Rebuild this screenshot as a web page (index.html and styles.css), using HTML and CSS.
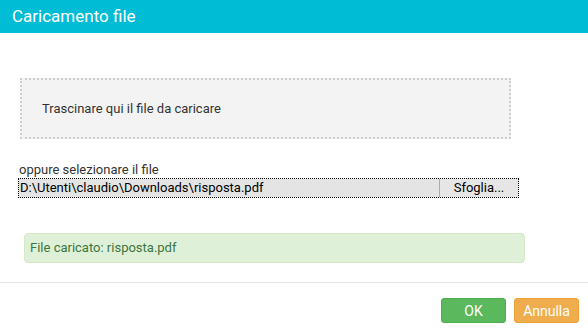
FILE: index.html
```html
<!DOCTYPE html>
<html lang="it">
<head>
    <meta charset="UTF-8">
    <meta name="viewport" content="width=device-width, initial-scale=1.0">
    <title>Caricamento file</title>
    <link rel="stylesheet" href="styles.css">
</head>
<body>
    <div class="dialog">
        <div class="dialog-header">Caricamento file</div>

        <div class="dialog-body">
            <div class="drop-zone">Trascinare qui il file da caricare</div>

            <div class="file-label">oppure selezionare il file</div>
            <div class="file-field">
                <div class="file-path">D:\Utenti\claudio\Downloads\risposta.pdf</div>
                <div class="file-browse">Sfoglia...</div>
            </div>

            <div class="alert-success">File caricato: risposta.pdf</div>
        </div>

        <div class="dialog-footer">
            <button class="btn btn-ok">OK</button>
            <button class="btn btn-cancel">Annulla</button>
        </div>
    </div>
</body>
</html>
```

FILE: styles.css
```css
body {
    margin: 0;
    font-family: Roboto, "Liberation Sans", sans-serif;
    background-color: #fff;
    color: #333;
}
.dialog {
    width: 588px;
    height: 334px;
    display: flex;
    flex-direction: column;
}
.dialog-header {
    height: 33px;
    line-height: 33px;
    padding-left: 12px;
    background-color: #00bcd4;
    color: #fff;
    font-size: 17px;
}
.dialog-body {
    padding-top: 45px;
    height: 204px;
    border-bottom: 1px solid #e5e5e5;
}
.drop-zone {
    margin-left: 20px;
    width: 467px;
    height: 57px;
    line-height: 57px;
    padding-left: 20px;
    border: 2px dotted #cdcdcd;
    background-color: #f3f3f3;
    font-size: 13px;
    color: #333;
}
.file-label {
    margin-top: 22px;
    margin-left: 19px;
    font-size: 13px;
    line-height: 17px;
    color: #333;
}
.file-field {
    margin-left: 18px;
    width: 499px;
    height: 18px;
    border: 1px dotted #000;
    display: flex;
    background-color: #e4e4e4;
    font-size: 13px;
    line-height: 18px;
    color: #000;
}
.file-path {
    flex: 1;
    padding-left: 1px;
}
.file-browse {
    width: 78px;
    text-align: center;
    background-color: #e6e6e6;
    border-left: 1px solid #adadad;
}
.alert-success {
    margin-top: 35px;
    margin-left: 24px;
    width: 494px;
    height: 28px;
    line-height: 28px;
    padding-left: 5px;
    border: 1px solid #d6e9c6;
    border-radius: 4px;
    background-color: #dff0d8;
    color: #3c763d;
    font-size: 13px;
}
.dialog-footer {
    display: flex;
    justify-content: flex-end;
    gap: 8px;
    padding-top: 15px;
    padding-right: 9px;
}
.btn {
    width: 65px;
    height: 25px;
    border: 1px solid transparent;
    border-radius: 3px;
    color: #fff;
    font-family: Roboto, "Liberation Sans", sans-serif;
    font-size: 14px;
    padding: 0;
}
.btn-ok {
    background-color: #5cb85c;
    border-color: #4cae4c;
}
.btn-cancel {
    background-color: #f0ad4e;
    border-color: #eea236;
}
```
